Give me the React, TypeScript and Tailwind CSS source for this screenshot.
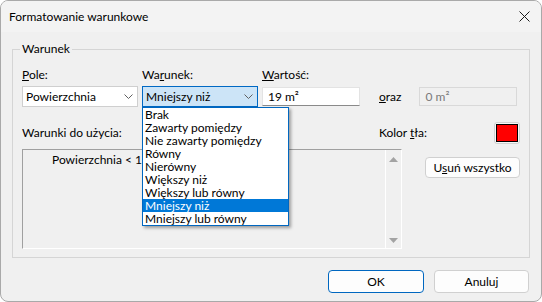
import React from "react";

const F = { fontFamily: "Lato, 'Noto Sans', sans-serif" };

function Chevron({ color = "#606060" }: { color?: string }) {
  return (
    <svg width="9" height="5" viewBox="0 0 9 5" className="block">
      <path d="M0.5 0.5 L4.5 4.5 L8.5 0.5" fill="none" stroke={color} strokeWidth="1" />
    </svg>
  );
}

const items = [
  "Brak",
  "Zawarty pomiędzy",
  "Nie zawarty pomiędzy",
  "Równy",
  "Nierówny",
  "Większy niż",
  "Większy lub równy",
  "Mniejszy niż",
  "Mniejszy lub równy",
];

export default function App() {
  return (
    <div className="w-[542px] h-[302px] bg-white text-[12px] leading-[16px] text-black" style={F}>
      <div className="w-[542px] h-[302px] flex flex-col rounded-[8px] border border-[#a9a9a9] overflow-hidden bg-[#f0f0f0]">
        {/* title bar */}
        <div className="h-[31px] shrink-0 bg-[#f3f3f3] flex items-center justify-between pl-[8px] pr-[11px]">
          <span className="text-[12px]">Formatowanie warunkowe</span>
          <svg width="11" height="11" viewBox="0 0 11 11">
            <path d="M0.5 0.5 L10.5 10.5 M10.5 0.5 L0.5 10.5" stroke="#1a1a1a" strokeWidth="1" />
          </svg>
        </div>
        {/* body */}
        <div className="flex-1 flex flex-col">
          <div className="relative mt-[17px] ml-[11px] w-[518px] h-[209px] border border-[#d5d5d5] pt-[17px] pl-[9px] pr-[9px]">
            <span className="absolute left-[7px] top-[-9px] px-[2px] bg-[#f0f0f0]">Warunek</span>
            {/* row 1 */}
            <div className="flex items-start">
              <div className="w-[116px] flex flex-col">
                <span><u>P</u>ole:</span>
                <div className="mt-[3px] h-[21px] bg-white border border-[#cfcfcf] flex items-center justify-between pl-[3px] pr-[4px]">
                  <span>Powierzchnia</span>
                  <Chevron />
                </div>
              </div>
              <div className="relative ml-[4px] w-[116px] flex flex-col">
                <span>Wa<u>r</u>unek:</span>
                <div className="mt-[3px] h-[21px] bg-[#cce4f7] border border-[#0069c4] flex items-center justify-between pl-[3px] pr-[4px]">
                  <span>Mniejszy niż</span>
                  <Chevron />
                </div>
                <div className="absolute left-0 top-[40px] w-[147px] bg-white border border-[#0067c0] shadow-[2px_2px_3px_rgba(0,0,0,0.35)] z-10 flex flex-col">
                  {items.map((it) => (
                    <div
                      key={it}
                      className={
                        it === "Mniejszy niż"
                          ? "h-[13px] leading-[13px] pl-[2px] bg-[#0078d7] text-white"
                          : "h-[13px] leading-[13px] pl-[2px]"
                      }
                    >
                      {it}
                    </div>
                  ))}
                </div>
              </div>
              <div className="ml-[4px] w-[98px] flex flex-col">
                <span><u>W</u>artość:</span>
                <div className="mt-[4px] h-[19px] bg-white border border-[#e3e3e3] border-b-[#8a8a8a] flex items-center pl-[5px]">
                  <span>19 m²</span>
                </div>
              </div>
              <div className="ml-[19px] mt-[20px] h-[19px] flex items-center">
                <span><u>o</u>raz</span>
              </div>
              <div className="ml-[18px] mt-[20px] w-[98px] h-[19px] bg-[#f0f0f0] border border-[#d9d9d9] flex items-center pl-[5px] text-[#7a7a7a]">
                0 m²
              </div>
            </div>
            {/* row 2 */}
            <div className="mt-[15px] h-[22px] flex items-center justify-between">
              <span>Warunki do użycia:</span>
              <div className="flex items-center">
                <span className="mr-[67px]">Kolor <u>t</u>ła:</span>
                <div className="w-[26px] h-[22px] rounded-[3px] border border-[#d0d0d0] bg-[#f7f7f7] flex items-center justify-center">
                  <div className="w-[22px] h-[18px] bg-[#ff0000] border border-black" />
                </div>
              </div>
            </div>
            {/* row 3 */}
            <div className="mt-[5px] flex items-start">
              <div className="w-[380px] h-[100px] border border-[#a0a0a0] border-r-white border-b-white flex">
                <div className="flex-1 pl-[29px] pt-[2px]">Powierzchnia &lt; 19</div>
                <div className="w-[16px] border-l border-white flex flex-col items-center justify-between pt-[7px] pb-[5px]">
                  <svg width="9" height="5" viewBox="0 0 9 5"><path d="M0 5 L4.5 0 L9 5 Z" fill="#a3a3a3" /></svg>
                  <svg width="9" height="5" viewBox="0 0 9 5"><path d="M0 0 L4.5 5 L9 0 Z" fill="#a3a3a3" /></svg>
                </div>
              </div>
              <div className="ml-[23px] mt-[8px] w-[95px] h-[21px] rounded-[4px] border border-[#d0d0d0] bg-[#fdfdfd] flex items-center justify-center">
                <span>U<u>s</u>uń wszystko</span>
              </div>
            </div>
          </div>
          {/* bottom buttons */}
          <div className="mt-[12px] flex justify-end pr-[12px] gap-[10px]">
            <div className="w-[96px] h-[23px] rounded-[4px] border border-[#0067c0] bg-[#fdfdfd] flex items-center justify-center">OK</div>
            <div className="w-[95px] h-[23px] rounded-[4px] border border-[#d0d0d0] bg-[#fdfdfd] flex items-center justify-center">Anuluj</div>
          </div>
        </div>
      </div>
    </div>
  );
}
